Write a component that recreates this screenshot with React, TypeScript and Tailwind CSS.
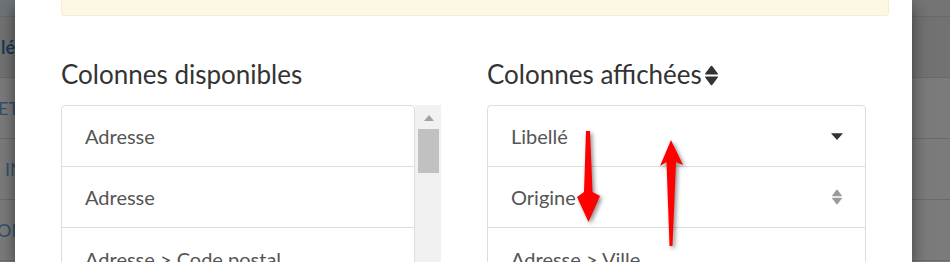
import React from "react";

function SortIcon({ color, className }: { color: string; className?: string }) {
  return (
    <svg viewBox="0 0 15 21" className={className} fill={color}>
      <path d="M1.2 8.6 L6.6 1.3 Q7.5 0.3 8.4 1.3 L13.8 8.6 Q14.4 9.6 13.2 9.6 L1.8 9.6 Q0.6 9.6 1.2 8.6 Z" />
      <path d="M1.2 12.4 L6.6 19.7 Q7.5 20.7 8.4 19.7 L13.8 12.4 Q14.4 11.4 13.2 11.4 L1.8 11.4 Q0.6 11.4 1.2 12.4 Z" />
    </svg>
  );
}

function CaretDown() {
  return (
    <svg viewBox="0 0 12 7" className="w-[12px] h-[7px]" fill="#333">
      <path d="M0.5 0.3 L11.5 0.3 Q12 0.3 11.6 0.8 L6.4 6.5 Q6 6.9 5.6 6.5 L0.4 0.8 Q0 0.3 0.5 0.3 Z" />
    </svg>
  );
}

const font = { fontFamily: "Lato, 'Open Sans', sans-serif" };

function BgStrip({ side }: { side: "left" | "right" }) {
  const texts = side === "left" ? ["lé", "ET", "IN", "ON"] : ["", "", "", ""];
  const offsets = ["ml-[1px]", "-ml-[2px]", "ml-[5px]", "-ml-[3px]"];
  return (
    <div
      className={`flex flex-col overflow-hidden shrink-0 ${side === "left" ? "w-[15px]" : "w-[38px]"} bg-[#7b7b7b]`}
      style={font}
    >
      <div className={`h-[17px] shrink-0 border-b border-[#696969] ${side === "left" ? "bg-[#6f7478]" : "bg-[#747474]"}`} />
      {texts.map((t, i) => (
        <div
          key={i}
          className={`h-[61px] shrink-0 border-b border-[#6a6a6a] flex items-center whitespace-nowrap ${i === 0 ? "bg-[#727272] h-[58px]" : "bg-[#7b7b7b]"}`}
        >
          <span
            className={`${offsets[i]} text-[18px] ${i === 0 ? "font-bold text-[#1e3a55]" : "text-[#34506a]"}`}
          >
            {t}
          </span>
        </div>
      ))}
    </div>
  );
}

function Row({ label, right, last }: { label: string; right?: React.ReactNode; last?: boolean }) {
  return (
    <div
      className={`h-[61px] shrink-0 flex items-center justify-between pl-[23px] pr-[22px] ${last ? "" : "border-b border-[#dddddd]"}`}
    >
      <span className="text-[20px] text-[#555555]">{label}</span>
      {right}
    </div>
  );
}

export default function App() {
  return (
    <div className="w-[950px] h-[262px] overflow-hidden relative flex bg-[#7b7b7b]" style={font}>
      <BgStrip side="left" />
      <div className="w-[897px] shrink-0 bg-white relative z-10 shadow-[0_5px_15px_rgba(0,0,0,0.5)] pl-[46px] pr-[23px] flex flex-col">
        <div className="h-[16px] shrink-0 bg-[#fcf8e3] border-x border-b border-[#faebcc] rounded-b-[4px]" />
        <div className="flex mt-[43px]">
          <div className="w-[380px] shrink-0 flex flex-col">
            <h3 className="text-[26px] leading-[31px] text-[#333333] whitespace-nowrap">Colonnes disponibles</h3>
            <div className="mt-[15px] flex">
              <div className="w-[354px] shrink-0 border border-[#dddddd] rounded-t-[4px] flex flex-col">
                <Row label="Adresse" />
                <Row label="Adresse" />
                <Row label="Adresse > Code postal" last />
              </div>
              <div className="w-[26px] shrink-0 bg-[#f1f1f1] flex flex-col items-center pt-[10px] h-[160px]">
                <svg viewBox="0 0 10 6" className="w-[10px] h-[6px] ml-[1px]" fill="#a3a3a3">
                  <path d="M5 0 L10 6 L0 6 Z" />
                </svg>
                <div className="w-[21px] h-[44px] mt-[8px] bg-[#c1c1c1] ml-[1px]" />
              </div>
            </div>
          </div>
          <div className="ml-[46px] w-[379px] shrink-0 flex flex-col">
            <h3 className="text-[26px] leading-[31px] text-[#333333] whitespace-nowrap flex items-center">
              Colonnes affichées
              <SortIcon color="#333333" className="w-[15px] h-[21px] ml-[2px] mt-[1px]" />
            </h3>
            <div className="mt-[15px] border border-[#dddddd] rounded-t-[4px] flex flex-col">
              <Row label="Libellé" right={<CaretDown />} />
              <Row label="Origine" right={<SortIcon color="#9a9a9a" className="w-[12px] h-[16px]" />} />
              <Row label="Adresse > Ville" last />
            </div>
          </div>
        </div>
      </div>
      <BgStrip side="right" />
      <svg
        className="absolute left-0 top-0 z-20 pointer-events-none"
        width="950"
        height="262"
        viewBox="0 0 950 262"
        style={{ filter: "drop-shadow(2px 2px 2px rgba(0,0,0,0.45))" }}
      >
        <polygon fill="#ff0000" points="586,131 590,131 592.5,192 600,196 588.5,222 577,197 584,192" />
        <polygon fill="#ff0000" points="671,140 683,165 676,162 672.5,246 669.5,246 666.5,162 660,166" />
      </svg>
    </div>
  );
}
